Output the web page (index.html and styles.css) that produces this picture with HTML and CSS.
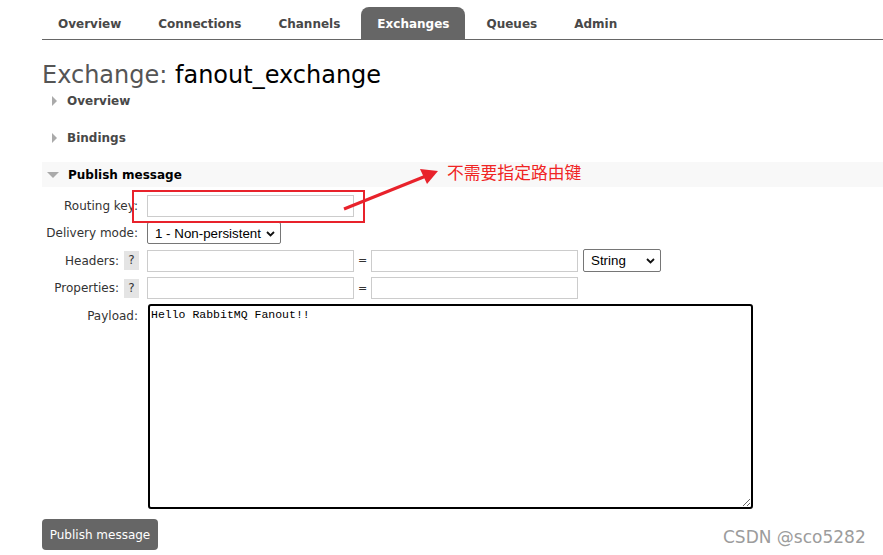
FILE: index.html
```html
<!DOCTYPE html>
<html lang="en">
<head>
<meta charset="utf-8">
<title>Exchange: fanout_exchange</title>
<link rel="stylesheet" href="styles.css">
</head>
<body>
<div class="page">
  <nav class="tabs">
    <a class="tab">Overview</a>
    <a class="tab">Connections</a>
    <a class="tab">Channels</a>
    <a class="tab active">Exchanges</a>
    <a class="tab">Queues</a>
    <a class="tab">Admin</a>
  </nav>

  <h1 class="title"><span class="title-lbl">Exchange:</span> fanout_exchange</h1>

  <div class="sec-head"><span class="tri-right"></span>Overview</div>
  <div class="sec-head"><span class="tri-right"></span>Bindings</div>
  <div class="sec-head open"><span class="tri-down"></span>Publish message</div>

  <form class="pub">
    <label class="lbl">Routing key:</label>
    <div class="cell"><input class="inp" type="text"></div>

    <label class="lbl">Delivery mode:</label>
    <div class="cell">
      <span class="sel sel-mode">
        <select><option>1 - Non-persistent</option></select>
        <svg class="chev" width="9" height="6" viewBox="0 0 9 6"><path d="M1 1 L4.5 4.5 L8 1" fill="none" stroke="#111" stroke-width="1.8"/></svg>
      </span>
    </div>

    <div class="lbl">Headers: <span class="help">?</span></div>
    <div class="cell">
      <input class="inp" type="text"><span class="eq">=</span><input class="inp" type="text">
      <span class="sel sel-type">
        <select><option>String</option></select>
        <svg class="chev" width="9" height="6" viewBox="0 0 9 6"><path d="M1 1 L4.5 4.5 L8 1" fill="none" stroke="#111" stroke-width="1.8"/></svg>
      </span>
    </div>

    <div class="lbl">Properties: <span class="help">?</span></div>
    <div class="cell">
      <input class="inp" type="text"><span class="eq">=</span><input class="inp" type="text">
    </div>

    <label class="lbl lbl-top">Payload:</label>
    <div class="cell"><textarea class="payload">Hello RabbitMQ Fanout!!</textarea></div>
  </form>

  <button class="btn" type="button">Publish message</button>
</div>

<svg class="annot" width="883" height="555" viewBox="0 0 883 555">
  <rect x="133" y="191" width="231" height="31" fill="none" stroke="#e8222b" stroke-width="2"/>
  <line x1="344" y1="209" x2="426" y2="176" stroke="#e8222b" stroke-width="3"/>
  <polygon points="438,171 420,169 427,184" fill="#e8222b"/>
</svg>
<div class="note">不需要指定路由键</div>
<div class="watermark">CSDN @sco5282</div>
</body>
</html>
```

FILE: styles.css
```css
html, body {
  margin: 0;
  padding: 0;
  background: #fff;
}
body {
  font-family: "DejaVu Sans", Verdana, sans-serif;
  color: #484848;
  width: 883px;
  height: 555px;
  overflow: hidden;
  position: relative;
}
.page {
  padding: 7px 0 0 42px;
}

/* tabs */
.tabs {
  display: flex;
  gap: 5px;
  border-bottom: 1px solid #666;
  height: 32px;
}
.tab {
  display: block;
  box-sizing: border-box;
  padding: 1px 16px 0;
  height: 32px;
  line-height: 32px;
  font-size: 12px;
  font-weight: bold;
  color: #484848;
  border-radius: 8px 8px 0 0;
}
.tab.active {
  background: #666;
  color: #fff;
}

/* title */
.title {
  margin: 22px 0 0 0;
  font-size: 24px;
  line-height: 26px;
  font-weight: normal;
  color: #000;
}
.title-lbl {
  color: #555;
}

/* section heads */
.sec-head {
  display: flex;
  align-items: center;
  height: 25px;
  margin-bottom: 12px;
  font-size: 12px;
  font-weight: bold;
  color: #484848;
}
.sec-head.open {
  background: #f8f8f8;
  color: #000;
  margin-bottom: 8px;
}
.tri-right {
  width: 0;
  height: 0;
  border-top: 5px solid transparent;
  border-bottom: 5px solid transparent;
  border-left: 5px solid #aaa;
  margin: 0 10px 0 10px;
}
.tri-down {
  width: 0;
  height: 0;
  border-left: 6px solid transparent;
  border-right: 6px solid transparent;
  border-top: 6px solid #aaa;
  margin: 1px 9px 0 5px;
}

/* form */
.pub {
  display: grid;
  grid-template-columns: 96px auto;
  column-gap: 9px;
  row-gap: 5px;
  align-items: center;
}
.lbl {
  font-size: 12px;
  color: #333;
  text-align: right;
  display: flex;
  justify-content: flex-end;
  align-items: center;
  gap: 5px;
  white-space: nowrap;
}
.lbl-top {
  align-self: start;
  padding-top: 5px;
}
.cell {
  display: flex;
  align-items: center;
}
.help {
  display: inline-block;
  width: 15px;
  height: 19px;
  line-height: 19px;
  text-align: center;
  background: #e4e4e4;
  color: #333;
  font-size: 12px;
  margin-right: -1px;
}
.inp {
  box-sizing: border-box;
  width: 207px;
  height: 22px;
  border: 1px solid #ccc;
  margin: 0;
  padding: 0 3px;
  font: 12px "DejaVu Sans", sans-serif;
  background: #fff;
  outline: none;
}
.eq {
  width: 17px;
  text-align: center;
  font-size: 11px;
  color: #333;
}
.sel {
  position: relative;
  display: inline-block;
}
.sel select {
  -webkit-appearance: none;
  appearance: none;
  box-sizing: border-box;
  height: 22px;
  border: 1px solid #767676;
  border-radius: 2px;
  background: #fff;
  color: #000;
  font: 13.33px "Liberation Sans", Arial, sans-serif;
  padding: 0 0 0 7px;
  margin: 0;
  outline: none;
}
.sel-mode select {
  width: 134px;
}
.sel-type {
  margin-left: 5px;
}
.sel-type select {
  width: 78px;
  height: 23px;
}
.chev {
  position: absolute;
  right: 6px;
  top: 9px;
  pointer-events: none;
}
.payload {
  box-sizing: border-box;
  width: 605px;
  height: 205px;
  margin: 0 0 0 1px;
  border: 2px solid #000;
  border-radius: 3px;
  padding: 2px 0 0 1px;
  font: 11.5px "Liberation Mono", "Courier New", monospace;
  color: #000;
  resize: both;
  outline: none;
}

/* button */
.btn {
  margin-top: 10px;
  width: 116px;
  height: 31px;
  background: #666;
  color: #fff;
  border: none;
  border-radius: 4px;
  font: 12px "DejaVu Sans", Verdana, sans-serif;
  padding: 0;
}

/* annotations (overlay) */
.annot {
  position: absolute;
  left: 0;
  top: 0;
  pointer-events: none;
}
.note {
  position: absolute;
  left: 447px;
  top: 161px;
  font-family: "Noto Sans CJK SC", sans-serif;
  font-size: 16.8px;
  line-height: 22px;
  color: #f02424;
}
.watermark {
  position: absolute;
  left: 723px;
  top: 525px;
  font-family: "DejaVu Sans", sans-serif;
  font-size: 17px;
  line-height: 24px;
  color: #9c9c9c;
  text-shadow: 0 0 1px #fff;
}
```
